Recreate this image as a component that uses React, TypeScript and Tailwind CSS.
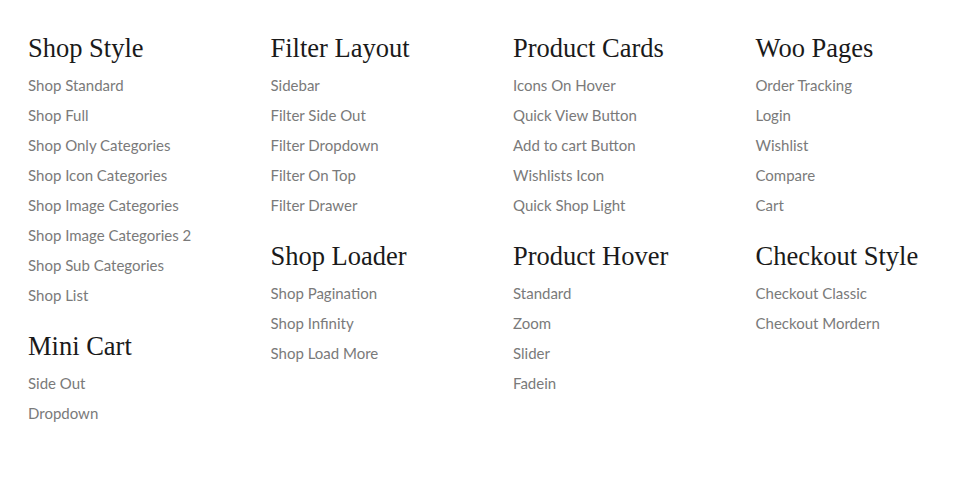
const columns = [
  [
    {
      title: "Shop Style",
      links: [
        "Shop Standard",
        "Shop Full",
        "Shop Only Categories",
        "Shop Icon Categories",
        "Shop Image Categories",
        "Shop Image Categories 2",
        "Shop Sub Categories",
        "Shop List",
      ],
    },
    { title: "Mini Cart", links: ["Side Out", "Dropdown"] },
  ],
  [
    {
      title: "Filter Layout",
      links: ["Sidebar", "Filter Side Out", "Filter Dropdown", "Filter On Top", "Filter Drawer"],
    },
    { title: "Shop Loader", links: ["Shop Pagination", "Shop Infinity", "Shop Load More"] },
  ],
  [
    {
      title: "Product Cards",
      links: ["Icons On Hover", "Quick View Button", "Add to cart Button", "Wishlists Icon", "Quick Shop Light"],
    },
    { title: "Product Hover", links: ["Standard", "Zoom", "Slider", "Fadein"] },
  ],
  [
    {
      title: "Woo Pages",
      links: ["Order Tracking", "Login", "Wishlist", "Compare", "Cart"],
    },
    { title: "Checkout Style", links: ["Checkout Classic", "Checkout Mordern"] },
  ],
];

export default function App() {
  return (
    <div className="min-h-[504px] w-[977px] bg-white pl-[28px] pt-[33px]">
      <div className="grid grid-cols-[repeat(4,242.5px)]">
        {columns.map((col, i) => (
          <div key={i} className="flex flex-col gap-[21px]">
            {col.map((section) => (
              <div key={section.title}>
                <h3 className="mb-[7px] text-[26.5px] leading-[30px] text-[#1a1a1a] font-['Liberation_Serif',serif]">
                  {section.title}
                </h3>
                <ul>
                  {section.links.map((link) => (
                    <li key={link}>
                      <a href="#" className="block text-[15px] leading-[30px] text-[#7a7a7a] font-['Lato',sans-serif]">
                        {link}
                      </a>
                    </li>
                  ))}
                </ul>
              </div>
            ))}
          </div>
        ))}
      </div>
    </div>
  );
}
